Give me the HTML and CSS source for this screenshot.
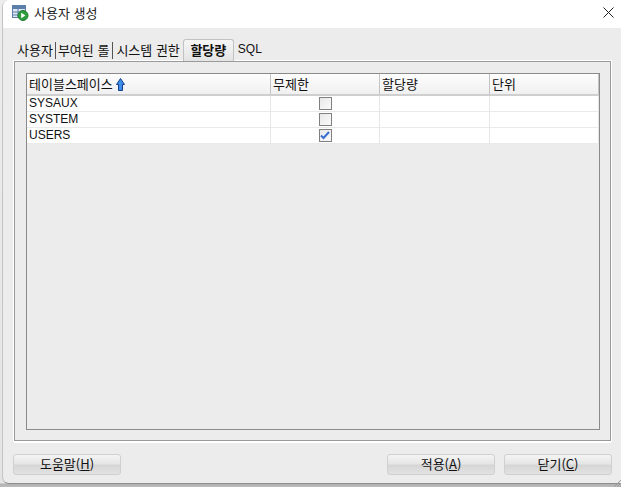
FILE: index.html
```html
<!DOCTYPE html>
<html lang="ko">
<head>
<meta charset="utf-8">
<title>사용자 생성</title>
<link rel="stylesheet" href="styles.css">
</head>
<body>
<div class="window">
  <header class="titlebar">
    <svg class="app-icon" width="17" height="17" viewBox="0 0 17 17">
      <rect x="0.5" y="1.5" width="13" height="12" fill="#dfe7f2" stroke="#5b7fa8"/>
      <rect x="1" y="2" width="12" height="3" fill="#5b7fa8"/>
      <path d="M1 8h12M1 11h12M6 5v8" stroke="#5b7fa8"/>
      <circle cx="11" cy="11.5" r="5" fill="#2f9e3f" stroke="#1c7a2c"/>
      <path d="M9.2 8.8l4.2 2.700-4.2 2.700z" fill="#fff"/>
    </svg>
    <span class="title">사용자 생성</span>
    <svg class="close" width="11" height="11" viewBox="0 0 11 11"><path d="M.5.5l10 10M10.500.5l-10 10" stroke="#222" fill="none"/></svg>
  </header>
  <main class="content">
    <nav class="tabs">
      <span class="tab first sep">사용자</span>
      <span class="tab second sep">부여된 롤</span>
      <span class="tab third">시스템 권한</span>
      <span class="tab active">할당량</span>
      <span class="tab sql">SQL</span>
    </nav>
    <section class="panel">
      <div class="table">
        <div class="row head">
          <div class="cell">테이블스페이스
            <svg class="sort" width="9" height="13" viewBox="0 0 9 13"><path d="M4.500.5L8.500 6.500H6.500v6h-4v-6H.5z" fill="#3f8fea" stroke="#123f8c"/></svg>
          </div>
          <div class="cell">무제한</div>
          <div class="cell">할당량</div>
          <div class="cell">단위</div>
        </div>
        <div class="row">
          <div class="cell">SYSAUX</div>
          <div class="cell center"><span class="check"></span></div>
          <div class="cell"></div>
          <div class="cell"></div>
        </div>
        <div class="row">
          <div class="cell">SYSTEM</div>
          <div class="cell center"><span class="check"></span></div>
          <div class="cell"></div>
          <div class="cell"></div>
        </div>
        <div class="row">
          <div class="cell">USERS</div>
          <div class="cell center"><span class="check"><svg width="10" height="9" viewBox="0 0 10 9"><path d="M1 4.500l2.500 2.500L9 1" fill="none" stroke="#3a6fd0" stroke-width="2"/></svg></span></div>
          <div class="cell"></div>
          <div class="cell"></div>
        </div>
      </div>
    </section>
    <footer class="buttons">
      <button class="btn" type="button">도움말(<u>H</u>)</button>
      <span class="spacer"></span>
      <button class="btn" type="button">적용(<u>A</u>)</button>
      <button class="btn" type="button">닫기(<u>C</u>)</button>
    </footer>
  </main>
</div>
<svg class="grip" width="7" height="7" viewBox="0 0 7 7"><path d="M0 7L7 0M3 7L7 3M6 7L7 6" stroke="#9a9a9a" fill="none"/></svg>
</body>
</html>
```

FILE: styles.css
```css
* { box-sizing: border-box; }
html, body { margin: 0; height: 100%; }
body {
  position: relative;
  width: 621px;
  height: 487px;
  overflow: hidden;
  background: linear-gradient(to bottom, #ededed 0, #e4e4e4 483px, #b0b0b0 484px, #bcbcbc 487px);
  font-family: "Noto Sans CJK KR", "Liberation Sans", sans-serif;
  font-size: 13px;
  color: #111;
}
.window {
  height: 484px;
  margin-left: 2px;
  background: #ececec;
  border-left: 1px solid #c4c4c4;
  border-bottom: 1px solid #8e8e8e;
  border-top-left-radius: 7px;
  border-bottom-left-radius: 7px;
  display: flex;
  flex-direction: column;
  overflow: hidden;
}
.titlebar {
  height: 28px;
  background: #fff;
  display: flex;
  align-items: center;
  padding: 0 7px 4px 9px;
  flex: none;
}
.app-icon { flex: none; }
.title { margin-left: 5px; font-size: 13px; color: #222; flex: 1; }
.close { flex: none; }
.content {
  flex: 1;
  display: flex;
  flex-direction: column;
  padding: 11px 9px 8px 10px;
  min-height: 0;
}
.tabs {
  height: 22px;
  display: flex;
  align-items: flex-end;
  flex: none;
  position: relative;
  z-index: 1;
}
.tab {
  height: 21px;
  line-height: 19px;
  font-size: 13px;
  white-space: nowrap;
}
.sep { border-right: 1px solid #555; height: 17px; line-height: 15px; margin-bottom: 2px; }
.first { padding: 0 2px 0 4px; }
.second { padding: 0 3px 0 2px; }
.third { padding: 0 3px; }
.active {
  width: 51px;
  height: 22px;
  text-align: center;
  font-weight: 700;
  line-height: 20px;
  background: linear-gradient(#f6f6f6, #e4e4e4);
  border: 1px solid #c2c2c2;
  border-bottom: 0;
  border-radius: 3px 3px 0 0;
}
.sql { padding-left: 4px; font-family: "Liberation Sans", sans-serif; font-size: 12px; }
.panel {
  flex: 1;
  min-height: 0;
  margin: 0 1px 0 1px;
  background: #ececec;
  border: 1px solid #9a9a9a;
  box-shadow: 0 0 0 1px #fff, 0 2px 0 0 #fff;
  padding: 11px 10px 10px 11px;
}
.table {
  height: 100%;
  border: 1px solid #8a8a8a;
}
.row {
  display: grid;
  grid-template-columns: 244px 109px 110px 109px;
  height: 16px;
  background: #fff;
  border-bottom: 1px solid #eaeaea;
  font-family: "Liberation Sans", "Noto Sans CJK KR", sans-serif;
  font-size: 12px;
}
.head {
  height: 22px;
  background: linear-gradient(#fdfdfd, #f0f0f0);
  border-bottom: 2px solid #cfcfcf;
  font-family: "Noto Sans CJK KR", "Liberation Sans", sans-serif;
  font-size: 13px;
}
.cell {
  border-right: 1px solid #e6e6e6;
  padding-left: 2px;
  line-height: 15px;
  display: flex;
  align-items: center;
  white-space: nowrap;
  overflow: hidden;
}
.head .cell { border-right-color: #c4c4c4; line-height: 20px; }
.sort { margin-left: 3px; flex: none; }
.center { justify-content: center; padding-left: 0; }
.check {
  width: 13px;
  height: 13px;
  border: 1px solid #808080;
  background: linear-gradient(135deg, #e8e8e8, #fafafa);
  display: flex;
  align-items: center;
  justify-content: center;
}
.buttons {
  flex: none;
  display: flex;
  gap: 9px;
  margin-top: 13px;
  height: 21px;
}
.spacer { flex: 1; }
.btn {
  width: 108px;
  height: 21px;
  padding: 0 0 3px;
  border: 1px solid #d0d0d0;
  border-radius: 3px;
  background: linear-gradient(#f4f4f4 0%, #e6e6e6 45%, #d6d6d6 55%, #e2e2e2 100%);
  font-family: "Noto Sans CJK KR", "Liberation Sans", sans-serif;
  font-size: 13px;
  line-height: 17px;
  color: #111;
}
.grip { position: absolute; right: 0; bottom: 0; }
```
